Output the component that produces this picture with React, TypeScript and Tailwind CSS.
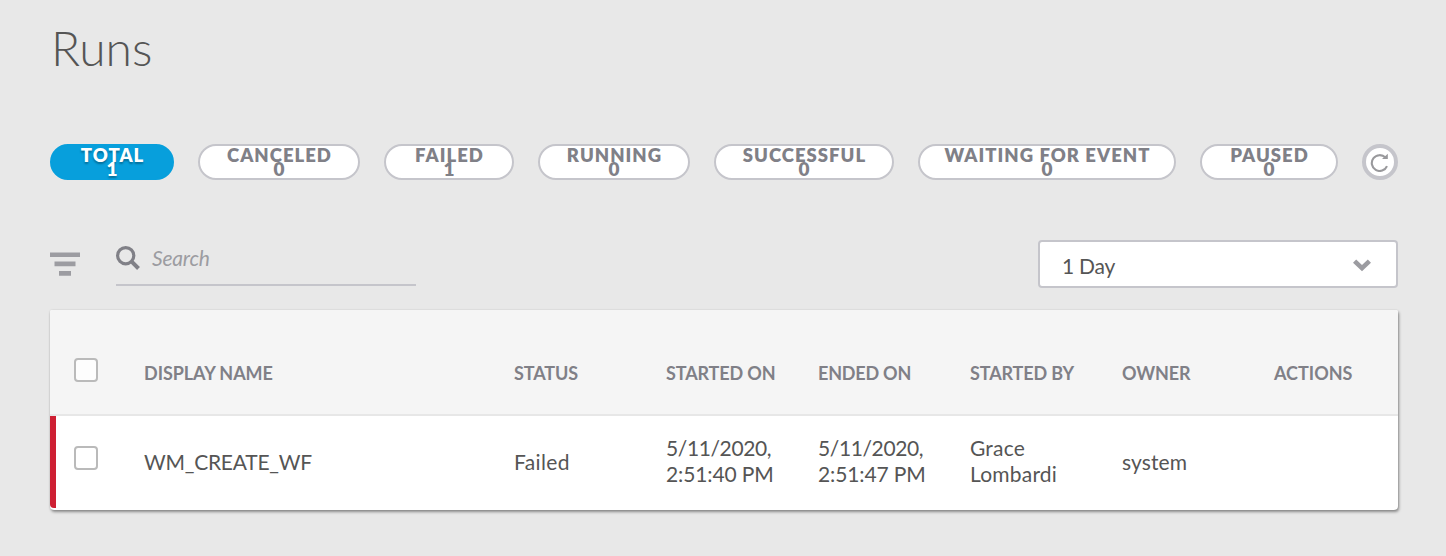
import React from "react";

const pills = [
  { label: "TOTAL", count: 1, box: "w-[124px] bg-[#079fdc] border-[#079fdc] text-white [text-shadow:0_2px_2px_rgba(0,0,0,0.3)]" },
  { label: "CANCELED", count: 0, box: "w-[162px] bg-white border-[#c5c5cb] text-[#808087]" },
  { label: "FAILED", count: 1, box: "w-[130px] bg-white border-[#c5c5cb] text-[#808087]" },
  { label: "RUNNING", count: 0, box: "w-[152px] bg-white border-[#c5c5cb] text-[#808087]" },
  { label: "SUCCESSFUL", count: 0, box: "w-[180px] bg-white border-[#c5c5cb] text-[#808087]" },
  { label: "WAITING FOR EVENT", count: 0, box: "w-[258px] bg-white border-[#c5c5cb] text-[#808087]" },
  { label: "PAUSED", count: 0, box: "w-[138px] bg-white border-[#c5c5cb] text-[#808087]" },
];

const columns = "grid grid-cols-[94px_370px_152px_152px_152px_152px_152px_124px]";

function Checkbox() {
  return <span className="ml-6 block size-6 rounded border-2 border-[#bababa] bg-white/80" />;
}

export default function App() {
  return (
    <div className="h-[556px] w-[1446px] overflow-hidden bg-[#e8e8e8] pl-[50px] font-['Lato',sans-serif] text-[#555]">
      <h1 className="h-[144px] pt-[19px] pl-px text-[48px] leading-[58px] font-light text-[#555]">Runs</h1>
      <div className="flex w-[1348px] justify-between">
        {pills.map((p) => (
          <button key={p.label} className={`${p.box} flex h-9 flex-col items-center rounded-full border-2 pt-[2px] pl-px text-[18.5px] leading-[14px] font-extrabold tracking-[1.02px]`}>
            <span className="whitespace-nowrap">{p.label}</span>
            <span className="text-[19px]">{p.count}</span>
          </button>
        ))}
        <button className="flex size-9 items-center justify-center rounded-full border-4 border-[#c5c5cb] bg-white">
          <svg width="20" height="20" viewBox="0 0 20 20" fill="none" stroke="#99999c" strokeWidth="2.1">
            <path d="M15.4 5.6A7.9 7.9 0 1 0 17 14.1" />
            <path d="M12 6.9h5.8V1.7z" fill="#99999c" stroke="none" />
          </svg>
        </button>
      </div>
      <div className="mt-[60px] flex h-[48px] w-[1348px]">
        <svg className="mt-3" width="30" height="24" viewBox="0 0 30 24" fill="#9c9ca1">
          <path d="M0 .4h30v4.6H0zM4.5 9.6h21v4.6h-21zM9 19h12v4.7H9z" />
        </svg>
        <div className="ml-9 flex h-[46px] w-[300px] border-b-2 border-[#c5c5cb]">
          <svg className="mt-[6px]" width="24" height="24" viewBox="0 0 24 24" fill="none" stroke="#808087">
            <circle cx="9.7" cy="9.7" r="8.1" strokeWidth="3.2" />
            <path d="M15.2 15.2L22.5 22.5" strokeWidth="4" />
          </svg>
          <span className="ml-3 pt-[4px] text-[21px] leading-[27px] tracking-[-0.2px] text-[#9c9ca1] italic">Search</span>
        </div>
        <div className="ml-auto flex w-[360px] rounded border-2 border-[#c5c5cb] bg-white pl-[22px] text-[21px] leading-[47px]">
          <span className="tracking-[-0.25px]">1 Day</span>
          <svg className="mt-[17px] mr-6 ml-auto" width="20" height="14" viewBox="0 0 20 14" fill="none" stroke="#9c9ca1" strokeWidth="4.6">
            <path d="M2.6 2.2l7.4 7 7.4-7" />
          </svg>
        </div>
      </div>
      <div className="mt-[22px] w-[1348px] overflow-hidden rounded-t-[2px] rounded-b bg-white shadow-[1px_2px_3px_rgba(0,0,0,0.4),0_0_2px_rgba(0,0,0,0.12)]">
        <div className={`${columns} h-[106px] border-b-2 border-[#e7e7e7] bg-[#f5f5f5] pt-[48px] text-[18px] leading-[30px] font-bold tracking-[-0.13px] text-[#808087]`}>
          <Checkbox />
          <span className="tracking-[-0.06px]">DISPLAY NAME</span>
          <span>STATUS</span>
          <span>STARTED ON</span>
          <span className="tracking-[-0.2px]">ENDED ON</span>
          <span>STARTED BY</span>
          <span>OWNER</span>
          <span className="tracking-normal">ACTIONS</span>
        </div>
        <div className={`${columns} relative h-[94px] items-center pb-[2px] text-[21px] leading-[26px]`}>
          <span className="absolute top-0 left-0 h-[92px] w-[6px] rounded-bl bg-[#ce1f33]" />
          <div className="pb-2"><Checkbox /></div>
          <span className="tracking-[-0.24px]">WM_CREATE_WF</span>
          <span className="tracking-[0.35px]">Failed</span>
          <span className="pb-[2px] tracking-[-0.13px]"><span className="tracking-[-0.38px]">5/11/2020,</span><br />2:51:40 PM</span>
          <span className="pb-[2px] tracking-[-0.13px]"><span className="tracking-[-0.38px]">5/11/2020,</span><br />2:51:47 PM</span>
          <span className="pb-[2px] tracking-[0.2px]">Grace<br />Lombardi</span>
          <span className="tracking-[0.1px]">system</span>
          <span />
        </div>
      </div>
    </div>
  );
}
